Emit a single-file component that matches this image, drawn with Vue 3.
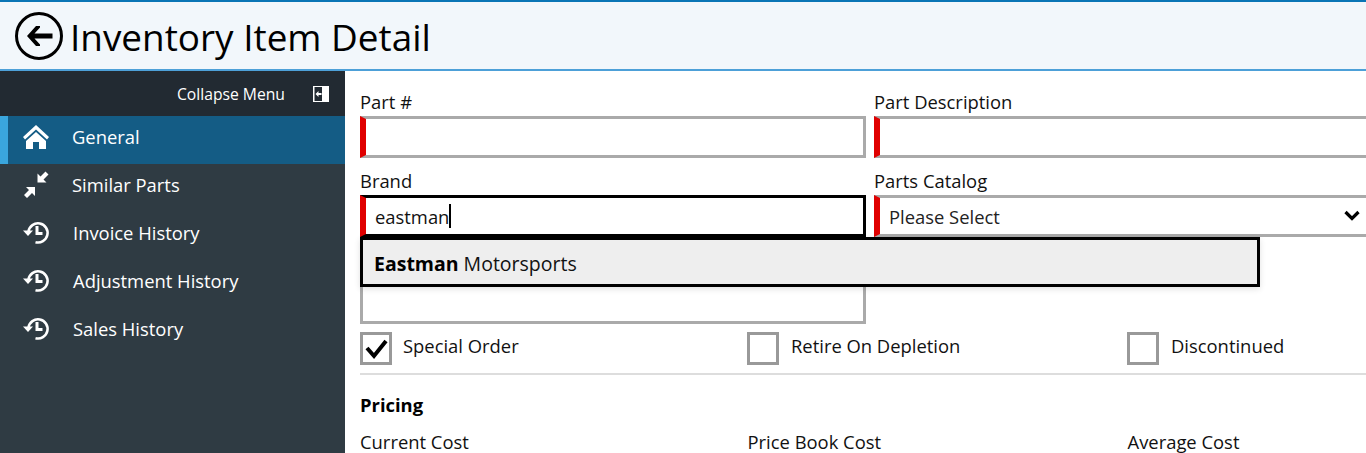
<template>
  <div class="page">
    <header class="top-bar">
      <svg class="back-icon" viewBox="0 0 50 50" width="50" height="50">
        <circle cx="25" cy="25" r="22.5" fill="none" stroke="#000" stroke-width="3" />
        <path d="M13 25 L22 15 L26 15 L26 16.5 L20.5 22.5 L38.5 22.5 L38.5 27.5 L20.5 27.5 L26 33.5 L26 35 L22 35 Z" fill="#000" />
      </svg>
      <h1>Inventory Item Detail</h1>
    </header>

    <div class="body-row">
      <aside class="side-menu">
        <div class="collapse-row">
          <span>Collapse Menu</span>
          <svg class="collapse-icon" viewBox="0 0 16 16" width="16" height="16">
            <rect width="16" height="16" fill="#fff" />
            <rect x="1.5" y="1" width="7.5" height="14" fill="#222a32" />
            <path d="M2.5 8 L5.5 5 L5.5 7 L8.5 7 L8.5 9 L5.5 9 L5.5 11 Z" fill="#fff" />
          </svg>
        </div>
        <nav>
          <a v-for="item in menuItems" :key="item.label" class="menu-item" :class="[item.icon, { active: item.active }]">
            <svg class="menu-icon" viewBox="0 0 28 28" width="28" height="28">
              <path v-if="item.icon === 'home'" d="M14 3 L27 15 L25 17.5 L14 7.5 L3 17.5 L1 15 Z M14 10 L24 19 L24 27 L17 27 L17 20 L11 20 L11 27 L4 27 L4 19 Z" fill="#fff" />
              <g v-else-if="item.icon === 'compress'" fill="#fff">
                <path d="M14 14 L14 5 L17 8 L22 3 L25 6 L20 11 L23 14 Z" transform="translate(1.5 -1.5)" />
                <path d="M2 25 L7 20 L4 17 L13 17 L13 26 L10 23 L5 28 Z" />
              </g>
              <g v-else>
                <path d="M6.5 13.5 A9.6 9.6 0 1 1 13.5 24.2" fill="none" stroke="#fff" stroke-width="2.6" />
                <path d="M1 12.5 L11 12.5 L6 18 Z" fill="#fff" />
                <path d="M13.5 8 L16.5 8 L16.5 14 L20.5 14 L20.5 17 L13.5 17 Z" fill="#fff" />
              </g>
            </svg>
            <span class="menu-label">{{ item.label }}</span>
          </a>
        </nav>
      </aside>

      <main class="content">
        <div class="form-row">
          <label class="field">
            <span class="label">Part #</span>
            <span class="box required"></span>
          </label>
          <label class="field">
            <span class="label">Part Description</span>
            <span class="box required"></span>
          </label>
        </div>

        <div class="form-row brand-row">
          <div class="field brand-field">
            <span class="label">Brand</span>
            <span class="box required focused"><span class="box-text">eastman</span><i class="caret"></i></span>
            <div class="suggestions"><b>Eastman</b> Motorsports</div>
          </div>
          <div class="field">
            <span class="label">Parts Catalog</span>
            <span class="box required select">
              <span class="box-text">Please Select</span>
              <svg class="chevron" viewBox="0 0 16 12" width="16" height="12">
                <path d="M1.5 2 L8 8.5 L14.5 2" fill="none" stroke="#000" stroke-width="3.2" />
              </svg>
            </span>
          </div>
        </div>

        <div class="form-row third-row">
          <div class="field">
            <span class="box"></span>
          </div>
          <div class="field"></div>
        </div>

        <div class="checks">
          <div v-for="check in checks" :key="check.label" class="check">
            <span class="check-box">
              <svg v-if="check.on" viewBox="0 0 26 27" width="26" height="27">
                <path d="M4 13 L11 21 L23 6" fill="none" stroke="#000" stroke-width="4" />
              </svg>
            </span>
            <span class="check-label">{{ check.label }}</span>
          </div>
        </div>

        <hr />

        <h2>Pricing</h2>
        <div class="checks costs">
          <span>Current Cost</span>
          <span>Price Book Cost</span>
          <span>Average Cost</span>
        </div>
      </main>
    </div>
  </div>
</template>

<script setup>
const menuItems = [
  { label: 'General', icon: 'home', active: true },
  { label: 'Similar Parts', icon: 'compress' },
  { label: 'Invoice History', icon: 'history' },
  { label: 'Adjustment History', icon: 'history' },
  { label: 'Sales History', icon: 'history' },
];

const checks = [
  { label: 'Special Order', on: true },
  { label: 'Retire On Depletion', on: false },
  { label: 'Discontinued', on: false },
];
</script>

<style scoped>
.page {
  height: 453px;
  overflow: hidden;
  display: flex;
  flex-direction: column;
  font-family: "Open Sans", "Noto Sans", sans-serif;
  font-size: 18.4px;
  color: #111;
}

.top-bar {
  height: 71px;
  box-sizing: border-box;
  flex: none;
  display: flex;
  align-items: center;
  padding-left: 14px;
  gap: 6px;
  background: #f2f7fb;
  border-top: 2px solid #0a75b5;
  border-bottom: 2px solid #4da0d8;
}

.back-icon {
  flex: none;
}

h1 {
  margin: 0;
  padding-top: 2px;
  font-size: 36.9px;
  font-weight: 400;
  color: #000;
}

.body-row {
  flex: 1;
  display: flex;
  min-height: 0;
}

.side-menu {
  width: 345px;
  flex: none;
  background: #2f3b43;
  color: #fff;
}

.collapse-row {
  height: 45px;
  display: flex;
  align-items: center;
  justify-content: flex-end;
  gap: 28px;
  padding-right: 16px;
  background: #222a32;
  font-size: 15.7px;
}

.menu-item {
  height: 48px;
  display: flex;
  align-items: center;
  padding-left: 22px;
  padding-bottom: 8px;
  gap: 22px;
  box-sizing: border-box;
}

.menu-item.active {
  background: #145c85;
  border-left: 8px solid #3aa6dd;
  padding-left: 14px;
}

.menu-item.history .menu-label {
  margin-left: 1px;
}

.menu-icon {
  flex: none;
}

.content {
  flex: 1;
  min-width: 0;
  padding-left: 15px;
  padding-top: 18px;
  overflow: hidden;
}

.form-row {
  display: flex;
  gap: 8px;
  width: 1020px;
}

.field {
  flex: 1 1 0;
  display: block;
  position: relative;
}

.label {
  display: block;
  height: 27px;
  line-height: 25px;
}

.brand-row {
  margin-top: 10px;
}

.third-row {
  margin-top: 45px;
}

.box {
  display: flex;
  align-items: center;
  box-sizing: border-box;
  height: 42px;
  padding-left: 9px;
  border: 3px solid #aaa;
  background: #fff;
}

.box-text {
  line-height: 24px;
  padding-top: 1px;
}

.box.required {
  border-left: 6px solid #e00000;
}

.box.focused {
  border-top-color: #000;
  border-right-color: #000;
  border-bottom-color: #000;
}

.caret {
  display: inline-block;
  width: 2px;
  height: 24px;
  background: #000;
}

.select {
  position: relative;
  color: #222;
}

.chevron {
  position: absolute;
  right: 17px;
  top: 12px;
}

.suggestions {
  position: absolute;
  left: 0;
  top: 69px;
  width: 900px;
  height: 50px;
  box-sizing: border-box;
  display: flex;
  align-items: center;
  gap: 5px;
  padding-left: 11px;
  padding-top: 3px;
  border: 3px solid #000;
  background: #eee;
  box-shadow: 0 2px 6px rgba(0, 0, 0, 0.12);
  font-size: 19.5px;
  z-index: 2;
}

.suggestions b {
  font-weight: 700;
  color: #000;
}

.checks {
  display: flex;
  margin-top: 8px;
}

.check {
  flex: none;
  display: flex;
  align-items: center;
  gap: 11px;
  width: 387px;
}

.check:nth-child(2) {
  width: 380px;
}

.check:nth-child(n + 2) {
  gap: 12px;
}

.check-label {
  padding-bottom: 6px;
}

.check-box {
  flex: none;
  width: 32px;
  height: 33px;
  box-sizing: border-box;
  border: 3px solid #999;
}

.check-box svg {
  display: block;
}

hr {
  margin: 8px 0 0;
  border: none;
  border-top: 2px solid #ddd;
}

h2 {
  margin: 18px 0 0;
  font-size: 18.4px;
  line-height: 24px;
  font-weight: 700;
  color: #000;
}

.costs {
  margin-top: 12px;
}

.costs span {
  flex: none;
  width: 387.5px;
}

.costs span:nth-child(2) {
  width: 380px;
}
</style>

<style>
html,
body {
  overflow: hidden;
}
</style>
